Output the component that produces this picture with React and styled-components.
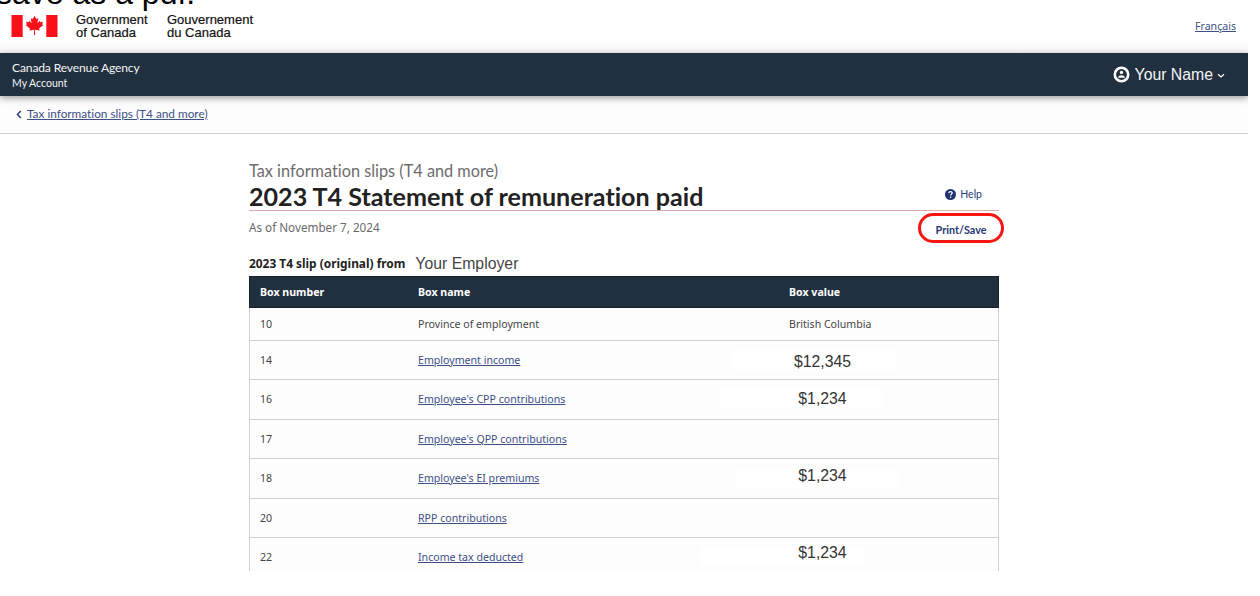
import React from 'react';
import styled, { createGlobalStyle } from 'styled-components';

const navy = '#21303f';
const link = '#3c4f86';
const lato = 'Lato, "Liberation Sans", sans-serif';
const noto = '"Noto Sans", "Liberation Sans", sans-serif';
const helvetica = '"Liberation Sans", Arial, sans-serif';

const GlobalStyle = createGlobalStyle`
  * {
    box-sizing: border-box;
  }

  body {
    margin: 0;
    background: #fff;
    overflow: hidden;
    font-variant-ligatures: none;
  }
`;

const Page = styled.div`
  position: relative;
  width: 1248px;
  height: 571px;
  overflow: hidden;
  white-space: nowrap;
`;

const Caption = styled.p`
  position: absolute;
  top: -25px;
  left: -4px;
  margin: 0;
  font-family: ${helvetica};
  font-size: 32px;
  line-height: 36px;
  color: #000;
`;

const Banner = styled.header`
  display: flex;
  align-items: flex-start;
  height: 53px;
  padding: 14px 12px 0 11px;
  background: linear-gradient(#fff 40px, #f7f7f7);
`;

const Flag = styled.svg`
  display: block;
  width: 47px;
  height: 23px;
  margin-right: 18px;
`;

const Wordmark = styled.div`
  width: ${props => props.width};
  margin-top: -1px;
  font-family: ${helvetica};
  font-size: 13px;
  line-height: 13px;
  color: #111;
  -webkit-text-stroke: 0.2px #111;
`;

const Language = styled.a`
  margin: 5px 0 0 auto;
  font-family: ${noto};
  font-size: 10.6px;
  line-height: 15px;
  color: ${link};
  text-decoration: underline;
`;

const AccountBar = styled.div`
  position: relative;
  display: flex;
  justify-content: space-between;
  align-items: center;
  height: 43px;
  padding: 0 23px 0 12px;
  background: ${navy};
  box-shadow: 0 2px 7px rgba(0, 0, 0, 0.4);
  color: #f4f5f6;
`;

const Agency = styled.div`
  padding-top: 2px;
  font-family: ${lato};
  font-size: 12.1px;
  letter-spacing: -0.15px;
  line-height: 16px;

  small {
    display: block;
    font-size: 10.5px;
    letter-spacing: 0;
    line-height: 15px;
  }
`;

const User = styled.div`
  display: flex;
  align-items: center;
  font-family: ${helvetica};
  font-size: 15.8px;
  line-height: 20px;

  svg:first-child {
    margin-right: 5px;
  }

  svg:last-child {
    margin: 3px 0 0 4px;
  }
`;

const Breadcrumb = styled.nav`
  display: flex;
  align-items: center;
  gap: 5px;
  height: 38px;
  padding: 0 0 1px 16px;
  border-bottom: 1px solid #d3d3d3;
  background: #fdfdfd;
  font-family: ${lato};
  font-size: 11.8px;
  line-height: 16px;
  color: ${link};

  a {
    text-decoration: underline;
  }
`;

const Main = styled.main`
  width: 750px;
  margin: 27px 0 0 249px;
`;

const Subtitle = styled.div`
  font-family: ${lato};
  font-size: 16.3px;
  line-height: 20px;
  color: #6c6c6c;
`;

const TitleRow = styled.div`
  display: flex;
  justify-content: space-between;
  align-items: flex-end;
  height: 30px;
  padding-right: 17px;
  border-bottom: 1px solid #dfa9ae;
`;

const Title = styled.h1`
  margin: 0;
  font-family: ${lato};
  font-weight: bold;
  font-size: 25.1px;
  line-height: 28px;
  color: #222;
`;

const Help = styled.a`
  display: flex;
  align-items: center;
  gap: 4px;
  margin-bottom: 9px;
  font-family: ${lato};
  font-size: 10.5px;
  line-height: 14px;
  color: #2b3b78;
`;

const DateRow = styled.div`
  display: flex;
  justify-content: space-between;
  height: 40px;
  padding-top: 2px;
`;

const AsOf = styled.div`
  padding-top: 6px;
  font-family: ${noto};
  font-size: 11.7px;
  line-height: 16px;
  color: #6a6a6a;
`;

const PrintButton = styled.button`
  width: 86px;
  height: 30px;
  margin-right: -5px;
  padding: 4px 0 0;
  border: 3px solid #f8140f;
  border-radius: 15px;
  background: #fff;
  font-family: ${lato};
  font-weight: bold;
  font-size: 10.8px;
  line-height: 14px;
  color: #263673;
`;

const SlipRow = styled.div`
  display: flex;
  align-items: center;
  height: 25px;
  padding-bottom: 2px;
  font-family: ${noto};
  font-weight: bold;
  font-size: 11.9px;
  line-height: 16px;
  color: #222;
`;

const Employer = styled.span`
  margin: 3px 0 0 10px;
  font-family: ${helvetica};
  font-weight: normal;
  font-size: 15.8px;
  line-height: 18px;
  color: #444;
`;

const Table = styled.div`
  border: 1px solid #d0d0d0;
  border-top: none;
  background: #fdfdfd;
  font-family: ${noto};
  font-size: 10.6px;
  line-height: 15px;
  color: #444;
`;

const Row = styled.div`
  position: relative;
  display: grid;
  grid-template-columns: 158px 371px 1fr;
  align-items: center;
  height: ${props => props.height}px;
  padding-left: 10px;
  border-bottom: 1px solid #cfcfcf;
`;

const HeadRow = styled(Row)`
  margin: 0 -1px;
  border: 1px solid #17202b;
  background: ${navy};
  color: #fff;
  font-weight: bold;
`;

const BoxLink = styled.a`
  color: ${link};
  text-decoration: underline;
`;

const Patch = styled.div`
  position: absolute;
  top: ${props => props.top}px;
  left: ${props => props.left}px;
  width: 163px;
  height: 20px;
  background: #fff;
`;

const Amount = styled.div`
  position: relative;
  top: ${props => props.shift}px;
  width: 67px;
  font-family: ${helvetica};
  font-size: 15.8px;
  line-height: 18px;
  color: #333;
  text-align: center;
`;

const rows = [
  { box: '10', name: 'Province of employment', text: 'British Columbia', height: 33 },
  { box: '14', name: 'Employment income', amount: '$12,345', shift: 2, patch: [9, 482], height: 39 },
  { box: '16', name: "Employee's CPP contributions", amount: '$1,234', shift: -1, patch: [8, 470], height: 40 },
  { box: '17', name: "Employee's QPP contributions", height: 39 },
  { box: '18', name: "Employee's EI premiums", amount: '$1,234', shift: -3, patch: [10, 486], height: 40 },
  { box: '20', name: 'RPP contributions', height: 39 },
  { box: '22', name: 'Income tax deducted', amount: '$1,234', shift: -4, patch: [8, 450], height: 39 }
];

function CanadaFlag() {
  return (
    <Flag viewBox="0 0 47 23">
      <path fill="#f9101b" d="M0.5 1h11.2V23H0.5zM35.3 1H46.5V23H35.3z" />
      <path
        fill="#f9101b"
        d="M23.5 1.8l1.8 3.3 2-.9-.9 5 2.4-2.4.6 1.4 2.6-.5-.9 2.7 1.3.7-4.3 3.5.5 1.8-4.7-.6.2 5.2h-1.2l.2-5.2-4.7.6.5-1.8-4.3-3.5 1.3-.7-.9-2.7 2.6.5.6-1.4 2.4 2.4-.9-5 2 .9z"
      />
    </Flag>
  );
}

function UserIcon() {
  return (
    <svg width="17" height="17" viewBox="0 0 17 17">
      <circle cx="8.5" cy="8.5" r="6.7" fill="none" stroke="#fff" strokeWidth="2.6" />
      <circle cx="8.5" cy="6.4" r="1.7" fill="#fff" />
      <path d="M5.2 11.3c0-2.8 6.6-2.8 6.6 0v.4H5.2z" fill="#fff" />
    </svg>
  );
}

function HelpIcon() {
  return (
    <svg width="11" height="11" viewBox="0 0 11 11">
      <circle cx="5.5" cy="5.5" r="5.5" fill="#22316f" />
      <path d="M3.8 4.1c.1-2 3.5-1.9 3.4 0 0 1.1-1.6 1.1-1.6 2.4" fill="none" stroke="#fff" strokeWidth="1.3" />
      <circle cx="5.6" cy="8.2" r="0.8" fill="#fff" />
    </svg>
  );
}

function BoxRow({box, name, text, amount, shift, patch, height}) {
  return (
    <Row height={height}>
      {patch && <Patch top={patch[0]} left={patch[1]} />}
      <span>{box}</span>
      <span>{text ? name : <BoxLink>{name}</BoxLink>}</span>
      {amount ? <Amount shift={shift}>{amount}</Amount> : <span>{text}</span>}
    </Row>
  );
}

export default function App() {
  return (
    <Page>
      <GlobalStyle />
      <Banner>
        <CanadaFlag />
        <Wordmark width="91px">Government<br />of Canada</Wordmark>
        <Wordmark width="90px">Gouvernement<br />du Canada</Wordmark>
        <Language>Français</Language>
      </Banner>
      <Caption>save as a pdf.</Caption>

      <AccountBar>
        <Agency>Canada Revenue Agency<small>My Account</small></Agency>
        <User>
          <UserIcon />
          Your Name
          <svg width="8" height="6" viewBox="0 0 8 6">
            <path d="M1 1.2l3 2.8 3-2.8" fill="none" stroke="#fff" strokeWidth="1.2" />
          </svg>
        </User>
      </AccountBar>

      <Breadcrumb>
        <svg width="6" height="9" viewBox="0 0 6 9">
          <path d="M4.8 1L1.5 4.5 4.8 8" fill="none" stroke="#2b3b78" strokeWidth="1.5" />
        </svg>
        <a>Tax information slips (T4 and more)</a>
      </Breadcrumb>

      <Main>
        <Subtitle>Tax information slips (T4 and more)</Subtitle>
        <TitleRow>
          <Title>2023 T4 Statement of remuneration paid</Title>
          <Help><HelpIcon />Help</Help>
        </TitleRow>
        <DateRow>
          <AsOf>As of November 7, 2024</AsOf>
          <PrintButton type="button">Print/Save</PrintButton>
        </DateRow>
        <SlipRow>
          2023 T4 slip (original) from
          <Employer>Your Employer</Employer>
        </SlipRow>
        <Table>
          <HeadRow height={32}>
            <span>Box number</span>
            <span>Box name</span>
            <span>Box value</span>
          </HeadRow>
          {rows.map(row => <BoxRow key={row.box} {...row} />)}
        </Table>
      </Main>
    </Page>
  );
}
